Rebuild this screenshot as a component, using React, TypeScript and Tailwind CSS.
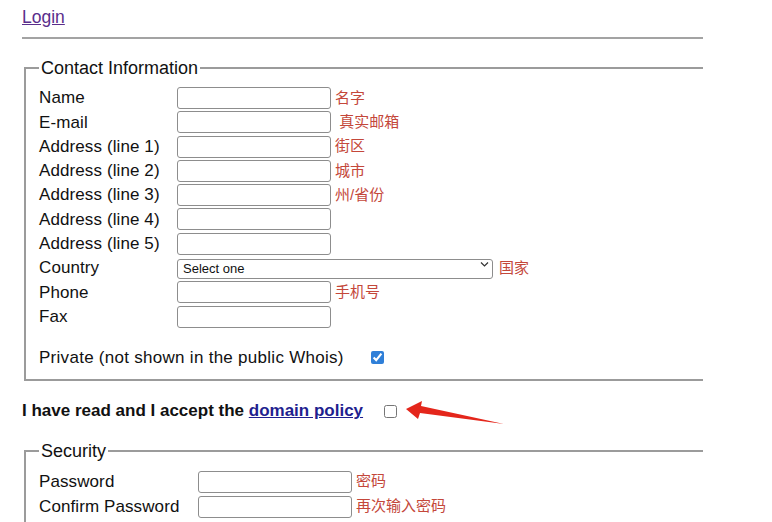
import React from 'react'

const contactRows: [string, string][] = [
  ['Name', '名字'],
  ['E-mail', '真实邮箱'],
  ['Address (line 1)', '街区'],
  ['Address (line 2)', '城市'],
  ['Address (line 3)', '州/省份'],
  ['Address (line 4)', ''],
  ['Address (line 5)', ''],
]

const Field = ({ label, note, labelW }: { label: string; note: string; labelW: string }) => (
  <div className="flex items-center h-[22px]">
    <span className={`${labelW} shrink-0`}>{label}</span>
    <input type="text" className="w-[154px] h-[22px] border border-[#8d8d8d] rounded-[3px] bg-white" />
    {note && <span className="ml-[4px] text-[15px] tracking-normal text-[#c4473a]">{note}</span>}
  </div>
)

const App = () => {
  return (
    <div
      className="relative w-[703px] h-[522px] overflow-hidden bg-white pl-[22px] text-[17px] tracking-[0.1px] text-[#111]"
      style={{ fontFamily: '"Liberation Sans", Arial, "Noto Sans CJK SC", sans-serif' }}
    >
      <div className="pt-[7px] leading-[20px]">
        <a href="#" className="text-[17.5px] tracking-normal text-[#5a2e8c] underline">Login</a>
      </div>
      <hr className="mt-[9px] border-0 border-t-2 border-[#a3a3a3]" />

      <fieldset className="mt-[19px] ml-[2px] w-[760px] border-2 border-[#9b9b9b] px-[13px] pt-[9px] pb-[12px]">
        <legend className="px-[2px] text-[18px] tracking-normal leading-[20px]">Contact Information</legend>
        <div className="flex flex-col gap-[2.3px]">
          {contactRows.map(([l, n]) => (
            <Field key={l} label={l} note={n === '真实邮箱' ? '\u00a0真实邮箱' : n} labelW="w-[138px]" />
          ))}
          <div className="flex items-center h-[22px]">
            <span className="w-[138px] shrink-0">Country</span>
            <div className="relative">
              <select className="appearance-none w-[316px] h-[20px] border border-[#8d8d8d] rounded-[3px] bg-white pl-[5px] text-[13px] tracking-normal leading-[18px]">
                <option>Select one</option>
              </select>
              <svg className="absolute right-[4px] top-[6px] pointer-events-none" width="9" height="7" viewBox="0 0 9 7">
                <path d="M1 1.5 L4.5 5 L8 1.5" fill="none" stroke="#333" strokeWidth="1.2" />
              </svg>
            </div>
            <span className="ml-[6px] text-[15px] tracking-normal text-[#c4473a]">国家</span>
          </div>
          <Field label="Phone" note="手机号" labelW="w-[138px]" />
          <Field label="Fax" note="" labelW="w-[138px]" />
        </div>
        <div className="mt-[21px] flex items-center h-[18px]">
          <span className="tracking-[0.28px]">Private (not shown in the public Whois)</span>
          <input type="checkbox" defaultChecked className="ml-[27px] w-[13px] h-[13px] accent-[#2f7fd8]" />
        </div>
      </fieldset>

      <div className="mt-[21px] flex items-center h-[19px]">
        <span className="font-bold text-[17px] tracking-normal">
          I have read and I accept the{' '}
          <a href="#" className="text-[#1f1f8f] underline">domain policy</a>
        </span>
        <input type="checkbox" className="ml-[21px] w-[13px] h-[13px]" />
      </div>

      <fieldset className="mt-[20px] ml-[2px] w-[760px] border-2 border-[#9b9b9b] px-[13px] pt-[10px] pb-[12px]">
        <legend className="px-[2px] text-[18px] tracking-normal leading-[20px]">Security</legend>
        <div className="flex flex-col gap-[3px]">
          <Field label="Password" note="密码" labelW="w-[159px]" />
          <Field label="Confirm Password" note="再次输入密码" labelW="w-[159px]" />
        </div>
      </fieldset>

      {/* red annotation arrow */}
      <svg className="absolute left-0 top-0 pointer-events-none" width="703" height="522">
        <polygon
          points="406,409 422,401 421,406 504,424 420,413 418,419"
          fill="#e4261b"
        />
      </svg>
    </div>
  )
}

export default App
